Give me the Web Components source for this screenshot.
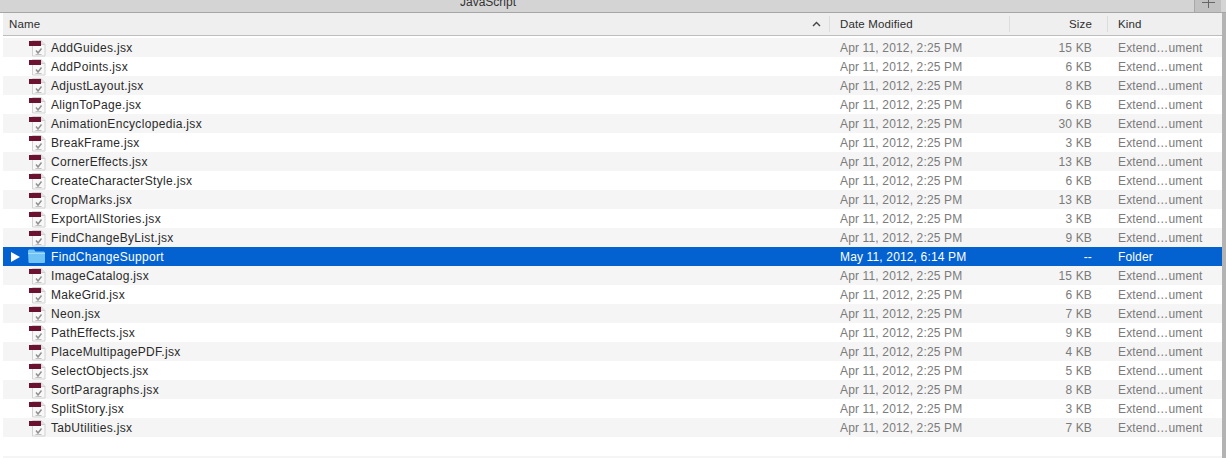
<!DOCTYPE html>
<html>
<head>
<meta charset="utf-8">
<title>JavaScript</title>
<style>
  html, body { margin: 0; padding: 0; background: #fff; }
  body { width: 1226px; height: 458px; overflow: hidden; font-family: "Liberation Sans", Arial, sans-serif; }
</style>
</head>
<body>
<finder-window title="JavaScript">
  <file-header></file-header>
  <file-row name="AddGuides.jsx" size="15 KB"></file-row>
  <file-row name="AddPoints.jsx" size="6 KB"></file-row>
  <file-row name="AdjustLayout.jsx" size="8 KB"></file-row>
  <file-row name="AlignToPage.jsx" size="6 KB"></file-row>
  <file-row name="AnimationEncyclopedia.jsx" size="30 KB"></file-row>
  <file-row name="BreakFrame.jsx" size="3 KB"></file-row>
  <file-row name="CornerEffects.jsx" size="13 KB"></file-row>
  <file-row name="CreateCharacterStyle.jsx" size="6 KB"></file-row>
  <file-row name="CropMarks.jsx" size="13 KB"></file-row>
  <file-row name="ExportAllStories.jsx" size="3 KB"></file-row>
  <file-row name="FindChangeByList.jsx" size="9 KB"></file-row>
  <file-row name="FindChangeSupport" date="May 11, 2012, 6:14 PM" size="--" kind="Folder" folder selected></file-row>
  <file-row name="ImageCatalog.jsx" size="15 KB"></file-row>
  <file-row name="MakeGrid.jsx" size="6 KB"></file-row>
  <file-row name="Neon.jsx" size="7 KB"></file-row>
  <file-row name="PathEffects.jsx" size="9 KB"></file-row>
  <file-row name="PlaceMultipagePDF.jsx" size="4 KB"></file-row>
  <file-row name="SelectObjects.jsx" size="5 KB"></file-row>
  <file-row name="SortParagraphs.jsx" size="8 KB"></file-row>
  <file-row name="SplitStory.jsx" size="3 KB"></file-row>
  <file-row name="TabUtilities.jsx" size="7 KB"></file-row>
  <file-row></file-row>
  <file-row></file-row>
</finder-window>

<script>
// columns are shared between the header and the rows
const COLUMNS = 'grid-template-columns: 826px 180px 98px 1fr;';

class FinderWindow extends HTMLElement {
  connectedCallback() {
    const title = this.getAttribute('title') || '';
    this.attachShadow({ mode: 'open' }).innerHTML = `
      <style>
        :host {
          display: flex;
          flex-direction: column;
          width: 1226px;
          height: 458px;
          overflow: hidden;
          background: #fff;
        }
        .tabs {
          flex: none;
          height: 12px;
          display: flex;
          background: #d5d4d5;
          border-bottom: 1px solid #a6a6a6;
        }
        .title {
          flex: 1;
          height: 12px;
          overflow: hidden;
          display: flex;
          justify-content: center;
          padding-right: 218px;
          font-size: 12px;
          line-height: 4px;
          color: #333;
        }
        .plus {
          flex: none;
          width: 26px;
          height: 12px;
          margin-right: 5px;
          display: flex;
          justify-content: center;
          background: #c2c1c2;
          border-left: 1px solid #a8a8a8;
        }
        .body {
          flex: 1;
          min-height: 0;
          display: flex;
        }
        .list {
          flex: 1;
          min-width: 0;
          margin-left: 3px;
          display: flex;
          flex-direction: column;
          overflow: hidden;
        }
        .edge {
          flex: none;
          width: 4px;
          background: #b3b3b3;
        }
      </style>
      <div class="tabs">
        <div class="title">${title}</div>
        <div class="plus">
          <svg width="13" height="12" viewBox="0 0 13 12"><path d="M0 2.500h13M6.500 0v8" stroke="#666" stroke-width="1" fill="none"/></svg>
        </div>
      </div>
      <div class="body">
        <div class="list"><slot></slot></div>
        <div class="edge"></div>
      </div>
    `;
  }
}

class FileHeader extends HTMLElement {
  connectedCallback() {
    this.attachShadow({ mode: 'open' }).innerHTML = `
      <style>
        :host {
          display: grid;
          ${COLUMNS}
          flex: none;
          height: 22px;
          margin-bottom: 2px;
          background: #efefef;
          border-bottom: 1px solid #bdbdbd;
          font-size: 11.5px;
          letter-spacing: .15px;
          color: #2e2e2e;
        }
        .col {
          display: flex;
          align-items: center;
          padding-left: 10px;
          margin: 3px 0;
          border-left: 1px solid #dcdcdc;
        }
        .col.name {
          padding-left: 6px;
          padding-right: 8px;
          border-left: none;
          justify-content: space-between;
        }
        .col.size {
          justify-content: flex-end;
          padding: 0 15px 0 0;
        }
      </style>
      <div class="col name"><span>Name</span>
        <svg width="9" height="6" viewBox="0 0 9 6"><path d="M1 5l3.500-3.500L8 5" stroke="#444" stroke-width="1.400" fill="none"/></svg>
      </div>
      <div class="col">Date Modified</div>
      <div class="col size">Size</div>
      <div class="col">Kind</div>
    `;
  }
}

class FileRow extends HTMLElement {
  connectedCallback() {
    const name = this.getAttribute('name');
    const date = this.getAttribute('date') || 'Apr 11, 2012, 2:25 PM';
    const size = this.getAttribute('size');
    const kind = this.getAttribute('kind') || 'Extend…ument';
    const folder = this.hasAttribute('folder');

    const docIcon = `
      <svg width="18" height="18" viewBox="0 0 18 18">
        <path d="M4.500 1.500h8.500l4 4v11.500h-12.500z" fill="#f8f8f8" stroke="#d2d2d2"/>
        <path d="M13 1.500v4h4" fill="#e4e4e4" stroke="#cfcfcf"/>
        <rect x="1" y="2" width="12" height="5" fill="#6a1230"/>
        <path d="M8 11.500l2 2.500 3.500-4.500" fill="none" stroke="#8f8f8f" stroke-width="1.400"/>
        <path d="M7.500 15.500h6" stroke="#c0c0c0"/>
      </svg>`;
    const folderIcon = `
      <svg width="17" height="15" viewBox="0 0 17 15">
        <path d="M0 2a1.500 1.500 0 0 1 1.500-1.500h4.500l1.500 2h8a1.500 1.500 0 0 1 1.500 1.500v9a1 1 0 0 1-1 1h-14.500a1 1 0 0 1-1-1z" fill="#72c4f5"/>
        <path d="M0 4.500h17" stroke="#a5dcfa"/>
      </svg>`;

    this.attachShadow({ mode: 'open' }).innerHTML = `
      <style>
        :host {
          display: grid;
          ${COLUMNS}
          flex: none;
          height: 19px;
          align-items: center;
          font-size: 12px;
          letter-spacing: .15px;
          color: #7b7b7b;
          white-space: nowrap;
        }
        :host(:nth-of-type(odd)) { background: #f5f5f5; }
        :host([selected]) { background: #0362cf; color: #fff; }
        .name {
          display: flex;
          align-items: center;
          color: #2a2a2a;
          letter-spacing: .33px;
        }
        :host([selected]) .name { color: #fff; }
        .arrow {
          flex: none;
          width: 25px;
          padding-left: 8px;
          box-sizing: border-box;
          display: flex;
        }
        .icon {
          flex: none;
          width: 23px;
          display: flex;
        }
        .date { padding-left: 11px; }
        .size { text-align: right; padding-right: 15px; }
        .kind { padding-left: 11px; }
      </style>
      ${name ? `
      <div class="name">
        <span class="arrow">${folder ? '<svg width="9" height="10" viewBox="0 0 9 10"><path d="M0 0l9 5-9 5z" fill="#fff"/></svg>' : ''}</span>
        <span class="icon">${folder ? folderIcon : docIcon}</span>
        <span>${name}</span>
      </div>
      <div class="date">${date}</div>
      <div class="size">${size}</div>
      <div class="kind">${kind}</div>` : ''}
    `;
  }
}

customElements.define('finder-window', FinderWindow);
customElements.define('file-header', FileHeader);
customElements.define('file-row', FileRow);
</script>
</body>
</html>
